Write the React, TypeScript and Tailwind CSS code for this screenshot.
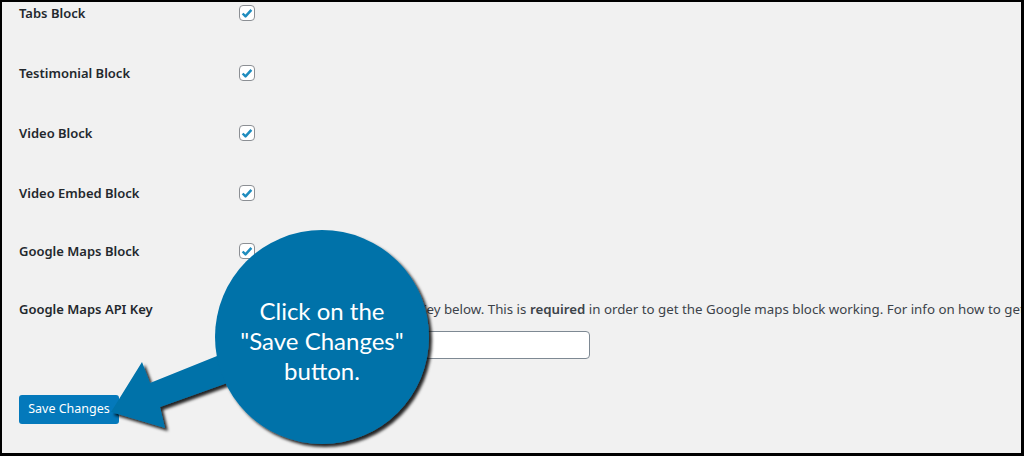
const blocks = ["Tabs Block", "Testimonial Block", "Video Block", "Video Embed Block", "Google Maps Block"];
const rowHeights = ["h-[60px]", "h-[60px]", "h-[60px]", "h-[58px]", "h-[58px]"];

function Checkbox() {
  return (
    <span className="flex h-4 w-4 items-center justify-center rounded-[4px] border border-[#8c8f94] bg-white">
      <svg viewBox="0 0 16 16" className="h-[15px] w-[15px]">
        <path d="M3 8 L6.3 11.3 L13 3.8" fill="none" stroke="#1e8cbe" strokeWidth="2.8" strokeLinejoin="round" />
      </svg>
    </span>
  );
}

function Callout() {
  return (
    <>
      <svg
        className="pointer-events-none absolute -left-[2px] -top-[2px]"
        width="1024"
        height="456"
        viewBox="0 0 1024 456"
      >
        <defs>
          <filter id="shadow" x="-20%" y="-20%" width="140%" height="140%">
            <feDropShadow dx="3" dy="3" stdDeviation="1.6" floodColor="#000" floodOpacity="0.85" />
          </filter>
        </defs>
        <g filter="url(#shadow)" fill="#0372a9">
          <polygon points="111,412 142,362 150,383 222,354 230,382 160,407 165,428" />
          <circle cx="322" cy="337" r="107" />
        </g>
      </svg>
      <div className="absolute left-[220px] top-[294px] w-[200px] text-center font-['Lato',sans-serif] text-[24px] leading-[30px] text-white">
        Click on the
        <br />
        "Save Changes"
        <br />
        button.
      </div>
    </>
  );
}

export default function App() {
  return (
    <div className="relative h-[456px] w-[1024px] overflow-hidden border-t-2 border-r-[3px] border-b-[3px] border-l-2 border-black bg-[#f1f1f1] font-['Noto_Sans',sans-serif]">
      <div className="flex flex-col pl-[17px] pt-px">
        {blocks.map((b, i) => (
          <div key={b} className={`flex ${rowHeights[i]}`}>
            <div className="w-[220px] shrink-0 text-[13px] font-semibold leading-5 text-[#23282d]">{b}</div>
            <div className="flex h-5 items-center">
              <Checkbox />
            </div>
          </div>
        ))}
        <div className="flex">
          <div className="w-[220px] shrink-0 text-[13px] font-semibold leading-5 text-[#23282d]">Google Maps API Key</div>
          <div className="flex min-w-0 flex-col gap-3">
            <p className="whitespace-nowrap text-[13.3px] leading-5 text-[#3c434a]">
              Enter your Google Maps API Key below. This is <strong className="font-semibold">required</strong> in order to get the Google maps block working. For info on how to get an API key, click here.
            </p>
            <input type="text" className="h-7 w-[351px] rounded-[4px] border border-[#7e8993] bg-white" />
          </div>
        </div>
        <div className="pt-9">
          <button className="h-[29px] w-[100px] rounded-[3px] bg-[#0479bb] text-[12.5px] text-white">Save Changes</button>
        </div>
      </div>
      <Callout />
    </div>
  );
}
